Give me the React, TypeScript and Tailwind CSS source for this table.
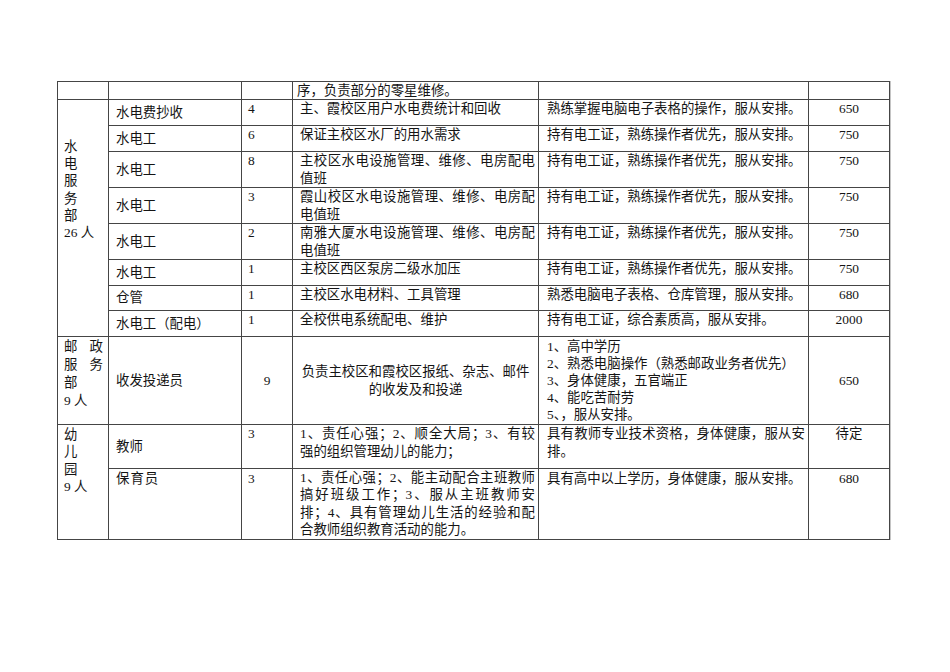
import React from 'react';

type Row = {
  role: string;
  num: string;
  duty: string[];
  req: string[];
  pay: string;
  h: string;
};

const waterRows: Row[] = [
  { role: '水电费抄收', num: '4', duty: ['主、霞校区用户水电费统计和回收'], req: ['熟练掌握电脑电子表格的操作，服从安排。'], pay: '650', h: 'h-[26px]' },
  { role: '水电工', num: '6', duty: ['保证主校区水厂的用水需求'], req: ['持有电工证，熟练操作者优先，服从安排。'], pay: '750', h: 'h-[26px]' },
  { role: '水电工', num: '8', duty: ['主校区水电设施管理、维修、电房配电', '值班'], req: ['持有电工证，熟练操作者优先，服从安排。'], pay: '750', h: 'h-[36px]' },
  { role: '水电工', num: '3', duty: ['霞山校区水电设施管理、维修、电房配', '电值班'], req: ['持有电工证，熟练操作者优先，服从安排。'], pay: '750', h: 'h-[36px]' },
  { role: '水电工', num: '2', duty: ['南雅大厦水电设施管理、维修、电房配', '电值班'], req: ['持有电工证，熟练操作者优先，服从安排。'], pay: '750', h: 'h-[36px]' },
  { role: '水电工', num: '1', duty: ['主校区西区泵房二级水加压'], req: ['持有电工证，熟练操作者优先，服从安排。'], pay: '750', h: 'h-[26px]' },
  { role: '仓管', num: '1', duty: ['主校区水电材料、工具管理'], req: ['熟悉电脑电子表格、仓库管理，服从安排。'], pay: '680', h: 'h-[25px]' },
  { role: '水电工（配电）', num: '1', duty: ['全校供电系统配电、维护'], req: ['持有电工证，综合素质高，服从安排。'], pay: '2000', h: 'h-[26px]' },
];

// base cell, alignment is added per cell
const td = 'border border-[#454545] p-0';

// all lines but the last are stretched to the full cell width, like Word's justify
const Lines = ({ lines }: { lines: string[] }) => (
  <>
    {lines.map((l, i) => (
      <div key={i} className={i < lines.length - 1 ? 'text-justify [text-align-last:justify]' : ''}>
        {l}
      </div>
    ))}
  </>
);

const DataCells = ({ r }: { r: Row }) => (
  <>
    <td className={`${td} align-middle pl-[7px]`}>{r.role}</td>
    <td className={`${td} align-top pl-[6px]`}>{r.num}</td>
    <td className={`${td} align-top pl-[7px] pr-[3px] leading-[17.5px]`}>
      <Lines lines={r.duty} />
    </td>
    <td className={`${td} align-top pl-[8px] pr-[3px]`}>
      <Lines lines={r.req} />
    </td>
    <td className={`${td} align-top text-center`}>{r.pay}</td>
  </>
);

export default function App() {
  return (
    <div className="w-[950px] h-[672px] bg-white pt-[81px] pl-[57px] text-[#141414] text-[13.4px] leading-[17.5px] font-['Liberation_Serif','Noto_Sans_CJK_SC',serif]">
      <table className="table-fixed border-collapse w-[832px] shadow-[1px_0_0_#c4c4c4]">
        <colgroup>
          <col className="w-[51px]" />
          <col className="w-[133px]" />
          <col className="w-[51px]" />
          <col className="w-[246px]" />
          <col className="w-[270px]" />
          <col className="w-[81px]" />
        </colgroup>
        <tbody>
          <tr className="h-[18px] leading-[16px]">
            <td className={td}></td>
            <td className={td}></td>
            <td className={td}></td>
            <td className={`${td} align-middle pl-[4px]`}>序，负责部分的零星维修。</td>
            <td className={td}></td>
            <td className={td}></td>
          </tr>

          {waterRows.map((r, i) => (
            <tr key={i} className={r.h}>
              {i === 0 && (
                <td rowSpan={8} className={`${td} align-top pl-[6px] pt-[38px] leading-[17.2px]`}>
                  <div>水</div>
                  <div>电</div>
                  <div>服</div>
                  <div>务</div>
                  <div>部</div>
                  <div>26 人</div>
                </td>
              )}
              <DataCells r={r} />
            </tr>
          ))}

          <tr className="h-[88px]">
            <td className={`${td} align-top pl-[6px] pr-[5px] pt-[1px] leading-[18px]`}>
              <div className="flex justify-between">
                <span>邮</span>
                <span>政</span>
              </div>
              <div className="flex justify-between">
                <span>服</span>
                <span>务</span>
              </div>
              <div>部</div>
              <div>9 人</div>
            </td>
            <td className={`${td} align-middle pl-[7px]`}>收发投递员</td>
            <td className={`${td} align-middle text-center`}>9</td>
            <td className={`${td} align-middle text-center px-[4px] leading-[18px]`}>
              <div>负责主校区和霞校区报纸、杂志、邮件</div>
              <div>的收发及和投递</div>
            </td>
            <td className={`${td} align-top pl-[8px] pt-[1px] leading-[17.1px]`}>
              <div>1、高中学历</div>
              <div>2、熟悉电脑操作（熟悉邮政业务者优先）</div>
              <div>3、身体健康，五官端正</div>
              <div>4、能吃苦耐劳</div>
              <div>5、，服从安排。</div>
            </td>
            <td className={`${td} align-middle text-center`}>650</td>
          </tr>

          <tr className="h-[44px]">
            <td rowSpan={2} className={`${td} align-top pl-[6px] pt-[1px] leading-[17.3px]`}>
              <div>幼</div>
              <div>儿</div>
              <div>园</div>
              <div>9 人</div>
            </td>
            <td className={`${td} align-middle pl-[7px]`}>教师</td>
            <td className={`${td} align-top pl-[6px]`}>3</td>
            <td className={`${td} align-top pl-[7px] pr-[3px] leading-[18px]`}>
              <Lines lines={['1、责任心强；2、顺全大局；3、有较', '强的组织管理幼儿的能力；']} />
            </td>
            <td className={`${td} align-top pl-[8px] pr-[3px] leading-[18px]`}>
              <Lines lines={['具有教师专业技术资格，身体健康，服从安', '排。']} />
            </td>
            <td className={`${td} align-top text-center`}>待定</td>
          </tr>

          <tr className="h-[71px]">
            <td className={`${td} align-top pl-[7px] pt-[1px] tracking-[1px]`}>保育员</td>
            <td className={`${td} align-top pl-[6px] pt-[1px]`}>3</td>
            <td className={`${td} align-top pl-[7px] pr-[3px] leading-[17.3px]`}>
              <Lines
                lines={[
                  '1、责任心强；2、能主动配合主班教师',
                  '搞好班级工作；3、服从主班教师安',
                  '排；4、具有管理幼儿生活的经验和配',
                  '合教师组织教育活动的能力。',
                ]}
              />
            </td>
            <td className={`${td} align-top pl-[8px] pt-[1px]`}>具有高中以上学历，身体健康，服从安排。</td>
            <td className={`${td} align-top text-center pt-[1px]`}>680</td>
          </tr>
        </tbody>
      </table>
    </div>
  );
}
